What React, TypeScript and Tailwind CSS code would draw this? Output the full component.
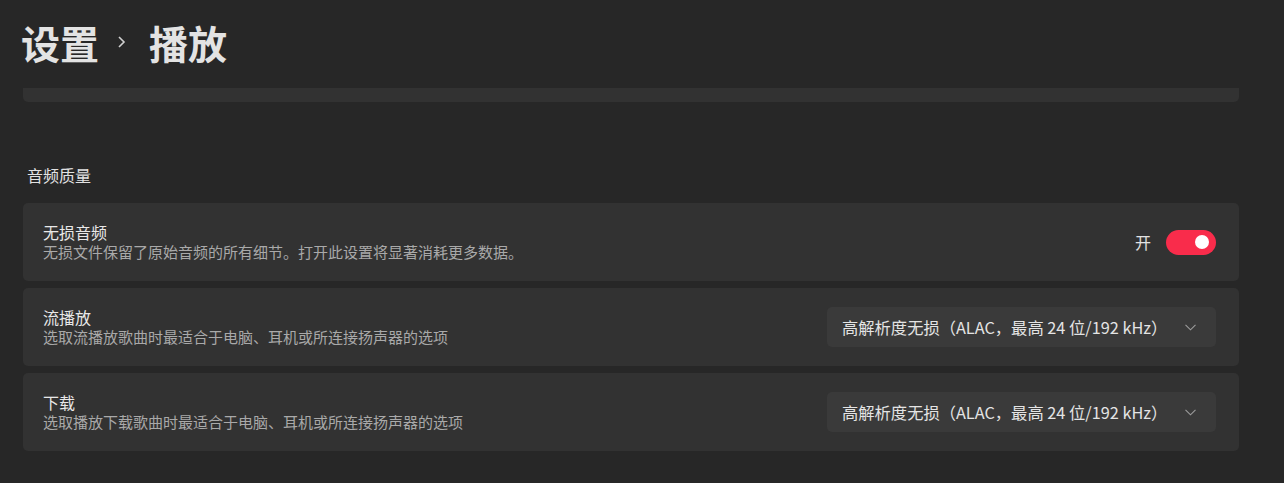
import React from "react";

const font = { fontFamily: '"Noto Sans CJK SC", "Noto Sans", sans-serif' };

function Chevron() {
  return (
    <svg width="11" height="7" viewBox="0 0 11 7" fill="none">
      <path d="M0.5 0.8 L5.5 5.8 L10.5 0.8" stroke="#9c9c9c" strokeWidth="1.1" />
    </svg>
  );
}

function Dropdown() {
  return (
    <div className="flex h-[40px] w-[389px] items-center justify-between rounded-[5px] bg-[#3a3a3a] pl-[15px] pr-[20px]">
      <span className="text-[16.3px] leading-[20px] text-[#e4e4e4]">高解析度无损（ALAC，最高 24 位/192 kHz）</span>
      <Chevron />
    </div>
  );
}

function Row({ title, desc, right }: { title: string; desc: string; right: React.ReactNode }) {
  return (
    <div className="flex h-[78px] items-center justify-between rounded-[5px] bg-[#323232] pl-[20px] pr-[23px]">
      <div className="flex flex-col">
        <span className="text-[16px] leading-[20px] text-[#e8e8e8]">{title}</span>
        <span className="text-[15px] leading-[20px] text-[#a9a9a9]">{desc}</span>
      </div>
      {right}
    </div>
  );
}

export default function App() {
  return (
    <div className="h-[483px] w-full overflow-hidden bg-[#272727]" style={font}>
      <div className="flex h-[88px] items-center pl-[21px] pb-[4px]">
        <span className="text-[39px] font-bold leading-[48px] text-[#e3e3e3]">设置</span>
        <svg className="ml-[18px] mr-[22px]" width="10" height="12" viewBox="0 0 10 12" fill="none">
          <path d="M2 1 L7 6 L2 11" stroke="#d0d0d0" strokeWidth="1.6" />
        </svg>
        <span className="text-[39px] font-bold leading-[48px] text-[#e3e3e3]">播放</span>
      </div>
      <div className="ml-[23px] mr-[45px] h-[14px] rounded-b-[5px] bg-[#323232]" />
      <div className="pl-[27px] pt-[63px] pb-[18px] text-[16px] leading-[20px] text-[#e2e2e2]">音频质量</div>
      <div className="ml-[23px] mr-[45px] flex flex-col gap-[7px]">
        <Row
          title="无损音频"
          desc="无损文件保留了原始音频的所有细节。打开此设置将显著消耗更多数据。"
          right={
            <div className="flex items-center">
              <span className="mr-[15px] text-[16px] leading-[20px] text-[#e2e2e2]">开</span>
              <div className="flex h-[25px] w-[50px] items-center justify-end rounded-full bg-[#f92c4b] pr-[7px]">
                <div className="h-[14px] w-[14px] rounded-full bg-white" />
              </div>
            </div>
          }
        />
        <Row title="流播放" desc="选取流播放歌曲时最适合于电脑、耳机或所连接扬声器的选项" right={<Dropdown />} />
        <Row title="下载" desc="选取播放下载歌曲时最适合于电脑、耳机或所连接扬声器的选项" right={<Dropdown />} />
      </div>
    </div>
  );
}
